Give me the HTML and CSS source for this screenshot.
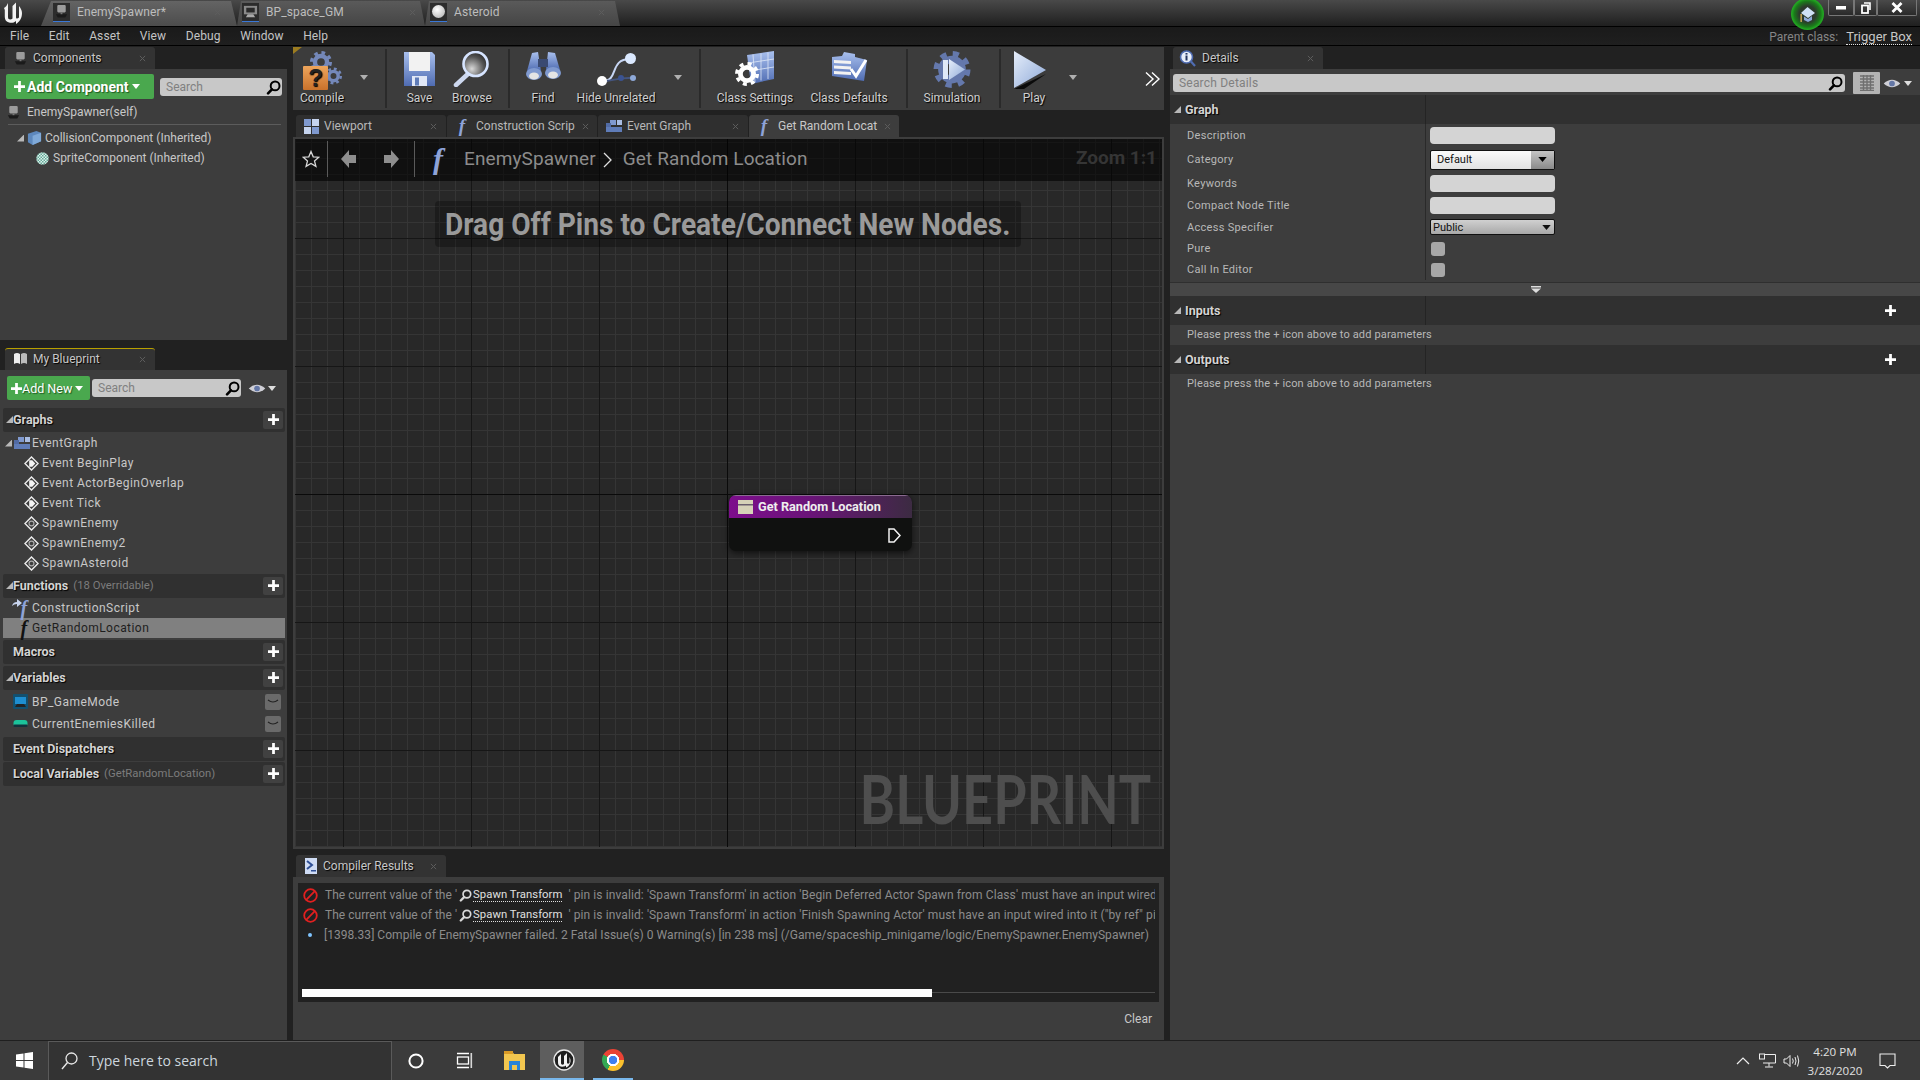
FILE: index.html
```html
<!DOCTYPE html>
<html lang="en">
<head>
    <meta charset="UTF-8">
    <meta name="viewport" content="width=device-width, initial-scale=1.0">
    <title>EnemySpawner</title>
    <link rel="stylesheet" href="styles.css">
</head>
<body>
    <svg class="defs" width="0" height="0">
        <defs>
            <linearGradient id="gb" x1="0" y1="0" x2="0" y2="1"><stop offset="0" stop-color="#a9c0ee"/><stop offset="1" stop-color="#4f6cb2"/></linearGradient>
            <linearGradient id="go" x1="0" y1="0" x2="0" y2="1"><stop offset="0" stop-color="#eda55c"/><stop offset="1" stop-color="#c9722b"/></linearGradient>
            <linearGradient id="gp" x1="0" y1="0" x2="1" y2="1"><stop offset="0" stop-color="#e6eefa"/><stop offset="1" stop-color="#8ea9d8"/></linearGradient>
            <radialGradient id="gl" cx=".35" cy=".7" r=".9"><stop offset="0" stop-color="#d8d8d8"/><stop offset=".55" stop-color="#555"/><stop offset="1" stop-color="#0c0c0c"/></radialGradient>
            <pattern id="chk" width="3" height="3" patternUnits="userSpaceOnUse"><rect width="3" height="3" fill="#dff2ee"/><rect width="1.5" height="1.5" fill="#62a896"/><rect x="1.5" y="1.5" width="1.5" height="1.5" fill="#62a896"/></pattern>
            <symbol id="gear" viewBox="0 0 20 20"><circle cx="10" cy="10" r="5.5" fill="none" stroke="currentColor" stroke-width="4"/><circle cx="10" cy="10" r="8.5" fill="none" stroke="currentColor" stroke-width="3" stroke-dasharray="3.3 3.4"/></symbol>
            <symbol id="search" viewBox="0 0 16 16"><circle cx="9.7" cy="6.3" r="4.7" fill="none" stroke="currentColor" stroke-width="2.1"/><path d="M6.3 10 L2.2 14.2" stroke="currentColor" stroke-width="2.8" stroke-linecap="round"/></symbol>
            <symbol id="eye" viewBox="0 0 24 14"><path d="M1 7 Q12 -3 23 7 Q12 17 1 7Z" fill="#cfcfd6"/><circle cx="12" cy="7" r="3.8" fill="#6477a6"/></symbol>
            <symbol id="down" viewBox="0 0 10 6"><path d="M0 0H10L5 6Z" fill="currentColor"/></symbol>
            <symbol id="plus" viewBox="0 0 12 12"><path d="M4.5 0h3v4.5H12v3H7.5V12h-3V7.5H0v-3h4.5z" fill="currentColor"/></symbol>
            <symbol id="x" viewBox="0 0 8 8"><path d="M1 1L7 7M7 1L1 7" stroke="currentColor" stroke-width="1.1"/></symbol>
            <symbol id="evt" viewBox="0 0 16 16"><path d="M8 1L15 8L8 15L1 8Z" fill="#3d3d3d" stroke="#ececec" stroke-width="1.5"/><path d="M5.5 4.6h3.3L12 8l-3.2 3.4H5.5z" fill="#f4f4f4"/></symbol>
            <symbol id="cst" viewBox="0 0 16 16"><path d="M8 1L15 8L8 15L1 8Z" fill="#3d3d3d" stroke="#ececec" stroke-width="1.5"/><circle cx="8" cy="8" r="2.6" fill="none" stroke="#aaa" stroke-width="1.3"/></symbol>
            <symbol id="tiles" viewBox="0 0 16 12"><rect x="0" y="7" width="16" height="5" fill="#5f7cb8"/><rect x="4" y="0" width="6" height="5" fill="#7f99cf"/><rect x="11" y="0" width="5" height="5" fill="#a9bde3"/><rect x="0" y="3" width="5" height="4" fill="#516ba5"/></symbol>
            <symbol id="actor" viewBox="0 0 16 16"><rect x="3.5" y="1" width="9" height="8" rx="1.2" fill="#9c9c9c"/><rect x="7" y="9" width="2" height="3" fill="#777"/><path d="M2 11h12l-2 3.5H4z" fill="#1a1a1a"/></symbol>
        </defs>
    </svg>

    <div class="titlebar">
        <svg class="ue-logo" viewBox="0 0 20 24" width="20" height="24"><path d="M1 7C3 6 4 4 5 2V16C5 19 8 19 9.5 17.5V5L13 1.5V16C13 18 14.500 18 16 16.500V5C17.500 7 19 9 19 12C19 18 16 21 13 23L13 20C11 22 8 22 6 21.500C3.500 21 1.800 19 1.800 16V9Z" fill="#f2f2f2"/></svg>
        <div class="file-tab file-tab-active">
            <span class="tab-thumb"><svg width="15" height="15"><use href="#actor"/></svg></span>
            <span class="file-tab-name">EnemySpawner*</span>
            <svg class="tab-x" width="7" height="7"><use href="#x"/></svg>
        </div>
        <div class="file-tab file-tab-gm">
            <span class="tab-thumb"><svg width="15" height="15" viewBox="0 0 16 16"><rect x="1" y="2" width="14" height="9" fill="#8a8a8a"/><rect x="3.500" y="4" width="9" height="5" fill="#2a2a2a"/><path d="M3 14h10l-2-3H5z" fill="#aaa"/></svg></span>
            <span class="file-tab-name">BP_space_GM</span>
            <svg class="tab-x" width="7" height="7"><use href="#x"/></svg>
        </div>
        <div class="file-tab file-tab-rock">
            <span class="tab-thumb"><span class="rock"></span></span>
            <span class="file-tab-name">Asteroid</span>
            <svg class="tab-x" width="7" height="7"><use href="#x"/></svg>
        </div>
        <div class="win-btns">
            <div class="win-btn win-min"><svg width="10" height="4"><rect width="10" height="3.500" fill="#fff"/></svg></div>
            <div class="win-btn win-max"><svg width="10" height="12" viewBox="0 0 10 12"><path d="M3 1H9V8" fill="none" stroke="#fff" stroke-width="1.600"/><rect x="1" y="3.500" width="6" height="7.500" fill="none" stroke="#fff" stroke-width="1.800"/></svg></div>
            <div class="win-btn win-close"><svg width="12" height="11" viewBox="0 0 12 11"><path d="M1.500 1L10.500 10M10.500 1L1.500 10" stroke="#fff" stroke-width="2.800"/></svg></div>
        </div>
        <div class="tutorial"><svg width="17" height="17" viewBox="0 0 17 17"><path d="M8.500 1L16 7L9 12L2 7Z" fill="#cfe0f5"/><path d="M5 10.500L9 13L13 10V14L9 16L5 14Z" fill="#8ea9d8"/><rect x="1.500" y="8" width="1.300" height="8" fill="#e2b45a"/></svg></div>
    </div>

    <div class="menubar">
        <span class="menu-item">File</span>
        <span class="menu-item">Edit</span>
        <span class="menu-item">Asset</span>
        <span class="menu-item">View</span>
        <span class="menu-item">Debug</span>
        <span class="menu-item">Window</span>
        <span class="menu-item">Help</span>
        <div class="parent-class">Parent class: <span class="parent-link">Trigger Box</span></div>
    </div>

    <div class="workspace">
        <div class="left">
            <div class="tab-strip">
                <div class="tab">
                    <svg class="tab-icon" width="15" height="15"><use href="#actor"/></svg>
                    <span class="tab-name">Components</span>
                    <svg class="tab-x" width="7" height="7"><use href="#x"/></svg>
                </div>
            </div>
            <div class="panel panel-components">
                <div class="comp-bar">
                    <div class="btn-green btn-component"><svg width="11" height="11"><use href="#plus"/></svg>Add Component<svg class="btn-arrow" width="8" height="5"><use href="#down"/></svg></div>
                    <div class="search search-comp">Search<svg width="15" height="15"><use href="#search"/></svg></div>
                </div>
                <div class="comp-row comp-self"><svg width="15" height="15"><use href="#actor"/></svg><span>EnemySpawner(self)</span></div>
                <div class="comp-row comp-collision">
                    <i class="twist"></i>
                    <svg width="15" height="16" viewBox="0 0 16 17"><path d="M1 4L10 1L15 3V12L6 16L1 13Z" fill="#5d88bd"/><path d="M6 6L15 3V12L6 16Z" fill="#7fa9d8"/></svg>
                    <span>CollisionComponent (Inherited)</span>
                </div>
                <div class="comp-row comp-sprite"><svg width="13" height="13" viewBox="0 0 13 13"><circle cx="6.500" cy="6.500" r="6.200" fill="url(#chk)"/></svg><span>SpriteComponent (Inherited)</span></div>
            </div>

            <div class="tab-strip tab-strip-bp">
                <div class="tab tab-bp">
                    <svg class="tab-icon" width="15" height="14" viewBox="0 0 15 14"><path d="M1 2Q4 0 7 2V12Q4 10 1 12Z" fill="#eee"/><path d="M8 2Q11 0 14 2V12Q11 10 8 12Z" fill="#bbb"/></svg>
                    <span class="tab-name">My Blueprint</span>
                    <svg class="tab-x" width="7" height="7"><use href="#x"/></svg>
                </div>
            </div>
            <div class="panel panel-bp">
                <div class="bp-bar">
                    <div class="btn-green btn-new"><svg width="11" height="11"><use href="#plus"/></svg>Add New<svg class="btn-arrow" width="8" height="5"><use href="#down"/></svg></div>
                    <div class="search search-bp">Search<svg width="15" height="15"><use href="#search"/></svg></div>
                    <svg class="eye" width="18" height="11"><use href="#eye"/></svg>
                    <svg class="eye-arrow" width="8" height="5"><use href="#down"/></svg>
                </div>
                <div class="cat"><i class="twist"></i><b>Graphs</b><span class="cat-add"><svg width="11" height="11"><use href="#plus"/></svg></span></div>
                <div class="item item-graph"><i class="twist"></i><svg width="16" height="12"><use href="#tiles"/></svg><span>EventGraph</span></div>
                <div class="item item-sub"><svg width="15" height="15"><use href="#evt"/></svg><span>Event BeginPlay</span></div>
                <div class="item item-sub"><svg width="15" height="15"><use href="#evt"/></svg><span>Event ActorBeginOverlap</span></div>
                <div class="item item-sub"><svg width="15" height="15"><use href="#evt"/></svg><span>Event Tick</span></div>
                <div class="item item-sub"><svg width="15" height="15"><use href="#cst"/></svg><span>SpawnEnemy</span></div>
                <div class="item item-sub"><svg width="15" height="15"><use href="#cst"/></svg><span>SpawnEnemy2</span></div>
                <div class="item item-sub"><svg width="15" height="15"><use href="#cst"/></svg><span>SpawnAsteroid</span></div>
                <div class="cat cat-fn"><i class="twist"></i><b>Functions</b><small>(18 Overridable)</small><span class="cat-add"><svg width="11" height="11"><use href="#plus"/></svg></span></div>
                <div class="item item-fn"><span class="fn-wrap"><svg class="fn-badge" width="10" height="8" viewBox="0 0 10 8"><path d="M0 7Q1 3 5 3V0L10 4L5 8V5Q2 5 0 7Z" fill="#c8d4ee"/></svg><span class="fn">f</span></span><span>ConstructionScript</span></div>
                <div class="item item-fn item-selected"><span class="fn-wrap"><span class="fn fn-dark">f</span></span><span>GetRandomLocation</span></div>
                <div class="cat cat-gap cat-plain"><b>Macros</b><span class="cat-add"><svg width="11" height="11"><use href="#plus"/></svg></span></div>
                <div class="cat cat-gap"><i class="twist"></i><b>Variables</b><span class="cat-add"><svg width="11" height="11"><use href="#plus"/></svg></span></div>
                <div class="item item-var">
                    <svg width="15" height="15" viewBox="0 0 15 15"><rect width="15" height="15" rx="1" fill="#12506f"/><rect x="2" y="3" width="11" height="7" fill="#1e8ed0"/><path d="M2 13h11l-2-3H4z" fill="#222"/></svg>
                    <span>BP_GameMode</span>
                    <span class="var-eye"><svg width="12" height="5" viewBox="0 0 12 5"><path d="M1 1Q6 5 11 1" fill="none" stroke="#222" stroke-width="1.200"/></svg></span>
                </div>
                <div class="item item-var">
                    <svg width="15" height="15" viewBox="0 0 15 15"><rect x="0.500" y="4" width="14" height="7" rx="3" fill="#1cc39a"/><rect x="0.500" y="8.500" width="14" height="2.500" rx="1" fill="#12323c"/></svg>
                    <span>CurrentEnemiesKilled</span>
                    <span class="var-eye"><svg width="12" height="5" viewBox="0 0 12 5"><path d="M1 1Q6 5 11 1" fill="none" stroke="#222" stroke-width="1.200"/></svg></span>
                </div>
                <div class="cat cat-plain cat-dispatch"><b>Event Dispatchers</b><span class="cat-add"><svg width="11" height="11"><use href="#plus"/></svg></span></div>
                <div class="cat cat-plain cat-local"><b>Local Variables</b><small>(GetRandomLocation)</small><span class="cat-add"><svg width="11" height="11"><use href="#plus"/></svg></span></div>
            </div>
        </div>

        <div class="center">
            <div class="toolbar">
                <div class="tool">
                    <svg width="40" height="40" viewBox="0 0 40 40"><use href="#gear" class="gear-blue" x="8" y="0" width="22" height="22"/><use href="#gear" class="gear-blue" x="23" y="14" width="17" height="22"/><rect x="1" y="15" width="25" height="24" rx="1" fill="url(#go)"/><text x="13.500" y="35" class="q-mark">?</text></svg>
                    <span>Compile</span>
                </div>
                <div class="tool-arrow"><svg width="8" height="5"><use href="#down"/></svg></div>
                <div class="tool-sep"></div>
                <div class="tool">
                    <svg width="33" height="36" viewBox="0 0 33 36"><path d="M1 1H29L32 4V35H1Z" fill="url(#gb)"/><rect x="6" y="1" width="21" height="19" fill="#f2f2f2"/><rect x="9" y="25" width="15" height="10" fill="#e0e7f6"/><rect x="12" y="26.500" width="4" height="8" fill="#5f7cb8"/></svg>
                    <span>Save</span>
                </div>
                <div class="tool">
                    <svg width="38" height="36" viewBox="0 0 38 36"><path d="M16 22L3 34" stroke="#cdd8ef" stroke-width="4.500" stroke-linecap="round"/><circle cx="22.500" cy="13" r="12" fill="url(#gl)" stroke="#d6e4ff" stroke-width="2.600"/></svg>
                    <span>Browse</span>
                </div>
                <div class="tool-sep"></div>
                <div class="tool">
                    <svg width="38" height="33" viewBox="0 0 38 33"><path d="M8 2L14 1L17 20H3Z" fill="url(#gb)"/><path d="M24 1L31 2L36 19H22Z" fill="url(#gb)"/><rect x="14" y="8" width="10" height="8" fill="#3a4a72"/><ellipse cx="10" cy="23" rx="8" ry="6" fill="#7f99cf"/><ellipse cx="29" cy="22" rx="8" ry="6" fill="#7f99cf"/><ellipse cx="10" cy="25" rx="5" ry="3.500" fill="#e4e4e4"/><ellipse cx="29" cy="24" rx="5" ry="3.500" fill="#e4e4e4"/></svg>
                    <span>Find</span>
                </div>
                <div class="tool">
                    <svg width="42" height="36" viewBox="0 0 42 36"><path d="M8 30C24 30 14 8 35 8" fill="none" stroke="#c7d6f4" stroke-width="2"/><path d="M8 30C20 30 24 26 37 27" fill="none" stroke="#44557f" stroke-width="2"/><circle cx="7" cy="30" r="5" fill="#fff"/><circle cx="35.500" cy="7.500" r="5.500" fill="#dbe9ff"/><circle cx="26" cy="27" r="3" fill="#3b5391"/><circle cx="38" cy="27" r="3" fill="#8ea9d8"/></svg>
                    <span>Hide Unrelated</span>
                </div>
                <div class="tool-arrow"><svg width="8" height="5"><use href="#down"/></svg></div>
                <div class="tool-sep"></div>
                <div class="tool">
                    <svg width="40" height="36" viewBox="0 0 40 36"><path d="M12 4L39 0V28L16 33Z" fill="url(#gb)"/><path d="M18 3.500L20 31M26 2.500V29.500M33 1.500V28M13 12L39 8M14 20L39 16" stroke="#dfe9f8" stroke-width=".8"/><use href="#gear" class="gear-white" x="0" y="11" width="24" height="24"/></svg>
                    <span>Class Settings</span>
                </div>
                <div class="tool">
                    <svg width="38" height="33" viewBox="0 0 38 33"><path d="M2 6L12 5L14 1L25 3V6L37 9L34 30L2 25Z" fill="url(#gb)"/><path d="M4 9L21 10V13L4 12ZM4 14.500L21 15.500V18.500L4 17.500ZM4 20L21 21V24L4 23Z" fill="#f2f2f2"/><path d="M21 18L26 25L36 9" fill="none" stroke="#fff" stroke-width="3"/></svg>
                    <span>Class Defaults</span>
                </div>
                <div class="tool-sep"></div>
                <div class="tool">
                    <svg width="38" height="37" viewBox="0 0 38 37"><use href="#gear" class="gear-sim" x="0" y="0" width="38" height="37"/><rect x="10" y="9" width="5" height="19" fill="#dfe9f8"/><path d="M16 8L32 18.500L16 29Z" fill="url(#gp)"/></svg>
                    <span>Simulation</span>
                </div>
                <div class="tool-sep"></div>
                <div class="tool tool-play">
                    <svg width="33" height="38" viewBox="0 0 33 38"><path d="M0 38L32 23L10 38Z" fill="#0b0b0b"/><path d="M0 0L32 19L0 37Z" fill="url(#gp)"/></svg>
                    <span>Play</span>
                </div>
                <div class="tool-arrow"><svg width="8" height="5"><use href="#down"/></svg></div>
                <div class="tool-more"><svg width="16" height="16" viewBox="0 0 16 16"><path d="M1 1.500L8 8L1 14.500M7 1.500L14 8L7 14.500" fill="none" stroke="#fff" stroke-width="1.400"/></svg></div>
            </div>

            <div class="doc-tabs">
                <div class="doc-tab"><svg width="15" height="15" viewBox="0 0 15 15"><rect width="7" height="7" fill="#7f99cf"/><rect x="8" width="7" height="7" fill="#c5d3ee"/><rect y="8" width="7" height="7" fill="#c5d3ee"/><rect x="8" y="8" width="7" height="7" fill="#7f99cf"/></svg><span>Viewport</span><svg class="tab-x" width="7" height="7"><use href="#x"/></svg></div>
                <div class="doc-tab"><span class="fn">f</span><span>Construction Scrip</span><svg class="tab-x" width="7" height="7"><use href="#x"/></svg></div>
                <div class="doc-tab"><svg width="16" height="12"><use href="#tiles"/></svg><span>Event Graph</span><svg class="tab-x" width="7" height="7"><use href="#x"/></svg></div>
                <div class="doc-tab doc-tab-active"><span class="fn">f</span><span>Get Random Locat</span><svg class="tab-x" width="7" height="7"><use href="#x"/></svg></div>
            </div>

            <div class="graph">
                <div class="graph-head">
                    <svg class="star" width="18" height="18" viewBox="0 0 18 18"><path d="M9 1.500L11.200 6.800L16.800 7.200L12.500 10.900L13.900 16.400L9 13.400L4.100 16.400L5.500 10.900L1.200 7.200L6.800 6.800Z" fill="none" stroke="#d8d8d8" stroke-width="1.300"/></svg>
                    <i class="graph-sep"></i>
                    <svg class="nav-arrow" width="16" height="20" viewBox="0 0 16 20"><path d="M8 1V6H15V14H8V19L0 10Z" fill="#8e8e8e"/></svg>
                    <svg class="nav-arrow nav-next" width="16" height="20" viewBox="0 0 16 20"><path d="M8 1V6H1V14H8V19L16 10Z" fill="#8e8e8e"/></svg>
                    <i class="graph-sep graph-sep-2"></i>
                    <span class="fn fn-big">f</span>
                    <span class="crumb">EnemySpawner</span>
                    <svg class="crumb-arrow" width="9" height="16" viewBox="0 0 9 16"><path d="M1 1L8 8L1 15" fill="none" stroke="#e0e0e0" stroke-width="1.300"/></svg>
                    <span class="crumb">Get Random Location</span>
                    <span class="zoom-label">Zoom 1:1</span>
                </div>
                <div class="hint"><span>Drag Off Pins to Create/Connect New Nodes.</span></div>
                <div class="node">
                    <div class="node-head">
                        <svg width="15" height="14" viewBox="0 0 15 14"><rect width="15" height="14" fill="#d6d2b8"/><rect y="4" width="15" height="1.500" fill="#6a5f6e"/></svg>
                        <span>Get Random Location</span>
                    </div>
                    <div class="node-body"><svg width="13" height="15" viewBox="0 0 13 15"><path d="M1 1H6L12 7.500L6 14H1Z" fill="none" stroke="#f2f2f2" stroke-width="1.500"/></svg></div>
                </div>
                <div class="watermark"><span>BLUEPRINT</span></div>
            </div>

            <div class="tab-strip tab-strip-results">
                <div class="tab">
                    <svg class="tab-icon" width="14" height="16" viewBox="0 0 14 16"><rect x="1" width="12" height="16" fill="#cfdcf5"/><path d="M3 3L8 7L3 11" fill="none" stroke="#2f4f96" stroke-width="2"/><rect x="7" y="12" width="5" height="1.500" fill="#2f4f96"/></svg>
                    <span class="tab-name">Compiler Results</span>
                    <svg class="tab-x" width="7" height="7"><use href="#x"/></svg>
                </div>
            </div>
            <div class="panel panel-results">
                <div class="results">
                    <div class="result-rows">
                        <div class="result">
                            <svg class="err" width="15" height="15" viewBox="0 0 15 15"><circle cx="7.500" cy="7.500" r="6.300" fill="none" stroke="#e02020" stroke-width="1.800"/><path d="M3.200 11.800L11.800 3.200" stroke="#e02020" stroke-width="1.800"/></svg>
                            <span>The current value of the '</span><svg class="link-icon" width="13" height="13"><use href="#search"/></svg><span class="result-link">Spawn Transform</span><span class="result-tail">' pin is invalid: 'Spawn Transform' in action 'Begin Deferred Actor Spawn from Class' must have an input wired into it</span>
                        </div>
                        <div class="result">
                            <svg class="err" width="15" height="15" viewBox="0 0 15 15"><circle cx="7.500" cy="7.500" r="6.300" fill="none" stroke="#e02020" stroke-width="1.800"/><path d="M3.200 11.800L11.800 3.200" stroke="#e02020" stroke-width="1.800"/></svg>
                            <span>The current value of the '</span><svg class="link-icon" width="13" height="13"><use href="#search"/></svg><span class="result-link">Spawn Transform</span><span class="result-tail">' pin is invalid: 'Spawn Transform' in action 'Finish Spawning Actor' must have an input wired into it ("by ref" pins must</span>
                        </div>
                        <div class="result">
                            <i class="result-dot"></i>
                            <span>[1398.33] Compile of EnemySpawner failed. 2 Fatal Issue(s) 0 Warning(s) [in 238 ms] (/Game/spaceship_minigame/logic/EnemySpawner.EnemySpawner)</span>
                        </div>
                    </div>
                    <div class="scroll-track"><div class="scroll-thumb"></div></div>
                </div>
                <div class="results-foot">Clear</div>
            </div>
        </div>

        <div class="right">
            <div class="tab-strip tab-strip-details">
                <div class="tab tab-details">
                    <svg class="tab-icon" width="17" height="17" viewBox="0 0 17 17"><circle cx="7.500" cy="7" r="6" fill="#e8eefb" stroke="#4f6cb2" stroke-width="1.600"/><rect x="6.500" y="5.500" width="2" height="5" fill="#24345f"/><rect x="6.500" y="3" width="2" height="1.600" fill="#24345f"/><path d="M12 11.500L16 16" stroke="#4f6cb2" stroke-width="2.200"/></svg>
                    <span class="tab-name">Details</span>
                    <svg class="tab-x" width="7" height="7"><use href="#x"/></svg>
                </div>
            </div>
            <div class="panel panel-details">
                <div class="details-bar">
                    <div class="search search-details">Search Details<svg width="15" height="15"><use href="#search"/></svg></div>
                    <div class="grid-btn"><svg width="14" height="16" viewBox="0 0 14 16"><path d="M0 1H14M0 4H14M0 7H14M0 10H14M0 13H14M0 15.500H14M3.500 0V16M7 0V16M10.500 0V16" stroke="#6f6f6f" stroke-width="1.400"/></svg></div>
                    <svg class="eye" width="18" height="11"><use href="#eye"/></svg>
                    <svg class="eye-arrow" width="8" height="5"><use href="#down"/></svg>
                </div>

                <div class="d-head"><div class="d-head-label"><i class="twist"></i><b>Graph</b></div></div>
                <div class="d-row h23"><div class="d-label">Description</div><div class="d-value"><div class="d-input"></div></div></div>
                <div class="d-row h25"><div class="d-label">Category</div><div class="d-value"><div class="combo"><span>Default</span><span class="combo-btn"><svg width="9" height="5"><use href="#down"/></svg></span></div></div></div>
                <div class="d-row"><div class="d-label">Keywords</div><div class="d-value"><div class="d-input"></div></div></div>
                <div class="d-row"><div class="d-label">Compact Node Title</div><div class="d-value"><div class="d-input"></div></div></div>
                <div class="d-row"><div class="d-label">Access Specifier</div><div class="d-value"><div class="combo-flat"><span>Public</span><svg width="9" height="5"><use href="#down"/></svg></div></div></div>
                <div class="d-row h21"><div class="d-label">Pure</div><div class="d-value"><div class="check"></div></div></div>
                <div class="d-row h21"><div class="d-label">Call In Editor</div><div class="d-value"><div class="check"></div></div></div>
                <div class="d-more"><svg width="10" height="7" viewBox="0 0 10 7"><rect width="10" height="1.500" fill="#ddd"/><path d="M0 2.500H10L5 7Z" fill="#ddd"/></svg></div>

                <div class="d-head d-head-add"><div class="d-head-label"><i class="twist"></i><b>Inputs</b></div><svg class="d-plus" width="11" height="11"><use href="#plus"/></svg></div>
                <div class="d-note">Please press the + icon above to add parameters</div>
                <div class="d-head d-head-add"><div class="d-head-label"><i class="twist"></i><b>Outputs</b></div><svg class="d-plus" width="11" height="11"><use href="#plus"/></svg></div>
                <div class="d-note">Please press the + icon above to add parameters</div>
            </div>
        </div>
    </div>

    <div class="taskbar">
        <div class="task-start"><svg width="17" height="17" viewBox="0 0 17 17"><path d="M0 2.500L7.500 1.400V8H0ZM8.500 1.300L17 0V8H8.500ZM0 9H7.500V15.600L0 14.500ZM8.500 9H17V17L8.500 15.700Z" fill="#fff"/></svg></div>
        <div class="task-search">
            <svg width="17" height="18" viewBox="0 0 17 18"><circle cx="10.500" cy="6.500" r="5.500" fill="none" stroke="#e8e8e8" stroke-width="1.300"/><path d="M6.500 10.500L1 17" stroke="#e8e8e8" stroke-width="1.400"/></svg>
            <span>Type here to search</span>
        </div>
        <div class="task-cell"><svg width="16" height="16" viewBox="0 0 16 16"><circle cx="8" cy="8" r="6.600" fill="none" stroke="#fff" stroke-width="2"/></svg></div>
        <div class="task-cell"><svg width="17" height="17" viewBox="0 0 17 17"><rect x="1.500" y="5" width="11" height="7" fill="none" stroke="#fff" stroke-width="1.300"/><path d="M1 1.500H13M1 15.500H13" stroke="#fff" stroke-width="1.300"/><rect x="14.500" y="1" width="1.600" height="15" fill="#fff" opacity=".8"/></svg></div>
        <div class="task-cell task-folder"><svg width="23" height="21" viewBox="0 0 23 21"><path d="M1 1H9L11 4H22V20H1Z" fill="#f2c64f"/><rect x="1" y="1" width="9" height="3" fill="#d99a26"/><path d="M6 11H17V20H14V15H9V20H6Z" fill="#2a84d8"/></svg></div>
        <div class="task-cell task-active"><svg width="22" height="22" viewBox="0 0 22 22"><circle cx="11" cy="11" r="10" fill="#1f1f1f" stroke="#e8e8e8" stroke-width="1.400"/><path d="M5 8C6 7 7 6 8 5V14C8 16 10 16 11 15V7L14 4V14C14.500 15 15.500 15 16.500 14V8C17.500 10 18 12 17 14.500C16 17 14.500 18 13 18.500V16.500C11 18 8 18 6.500 17C5 16 5 14 5 12Z" fill="#f4f4f4"/></svg></div>
        <div class="task-cell task-chrome"><i class="chrome"></i></div>
        <div class="tray">
            <div class="tray-cell"><svg width="14" height="8" viewBox="0 0 14 8"><path d="M1 7L7 1L13 7" fill="none" stroke="#eee" stroke-width="1.200"/></svg></div>
            <div class="tray-cell"><svg width="17" height="15" viewBox="0 0 17 15"><path d="M4 1.500H16.500V10H4M10 10V13.500M6 14H14" fill="none" stroke="#eee" stroke-width="1"/><rect x=".5" y="1" width="5" height="5" fill="#3b3b3b" stroke="#eee"/></svg></div>
            <div class="tray-cell"><svg width="17" height="14" viewBox="0 0 17 14"><path d="M1 5H3.500L7 1.500V12.500L3.500 9H1Z" fill="none" stroke="#eee"/><path d="M9.500 4.500Q11 7 9.500 9.500M12 3Q14 7 12 11M14.500 1.500Q17 7 14.500 12.500" fill="none" stroke="#eee"/></svg></div>
            <div class="clock"><div>4:20 PM</div><div>3/28/2020</div></div>
            <div class="tray-cell tray-note"><svg width="17" height="16" viewBox="0 0 17 16"><path d="M1 1H16V12.500H11L8.500 15L6 12.500H1Z" fill="none" stroke="#eee" stroke-width="1.100"/></svg></div>
        </div>
    </div>
</body>
</html>
```
FILE: styles.css
```css
* {
    box-sizing: border-box;
}

body {
    font-family: Roboto, "Liberation Sans", sans-serif;
    font-size: 12px;
    margin: 0;
    width: 1920px;
    height: 1080px;
    overflow: hidden;
    background-color: #212121;
    color: #c8c8c8;
    display: flex;
    flex-direction: column;
}

.defs {
    position: absolute;
}

svg {
    flex: none;
    display: block;
}

i {
    display: block;
    flex: none;
}

.tab-x {
    color: #5e5e5e;
    margin-left: auto;
}

.twist {
    width: 7px;
    height: 7px;
    background-color: #b8b8b8;
    clip-path: polygon(100% 0, 100% 100%, 0 100%);
}

.fn {
    font-family: "Liberation Serif", serif;
    font-style: italic;
    font-weight: bold;
    font-size: 19px;
    line-height: 18px;
    color: #8ea3d8;
    width: 14px;
    flex: none;
    text-align: center;
}

/* title bar */

.titlebar {
    position: relative;
    height: 27px;
    flex: none;
    display: flex;
    align-items: flex-end;
    background: linear-gradient(#494949, #1f1f1f);
    border-bottom: 1px solid #000;
}

.ue-logo {
    margin: 0 18px 1px 3px;
}

.file-tab {
    height: 25px;
    display: flex;
    align-items: center;
    padding: 0 16px 3px 5px;
    background: linear-gradient(#5a5a5a, #454545);
    clip-path: polygon(0 100%, 4px 0, calc(100% - 5px) 0, 100% 100%);
    color: #bdbdbd;
    letter-spacing: .1px;
}

.file-tab-active {
    width: 196px;
    padding-left: 12px;
    background: linear-gradient(#646464, #4c4c4c);
    clip-path: polygon(0 100%, 10px 0, calc(100% - 6px) 0, 100% 100%);
}

.file-tab-gm {
    width: 188px;
    padding-right: 9px;
}

.file-tab-rock {
    width: 195px;
    padding-right: 15px;
}

.tab-thumb {
    width: 17px;
    height: 19px;
    background-color: #2c2c2c;
    border-bottom: 1px solid #3a78d8;
    display: flex;
    align-items: center;
    justify-content: center;
    margin-right: 7px;
}

.rock {
    width: 13px;
    height: 13px;
    border-radius: 50%;
    background: radial-gradient(circle at 40% 35%, #fff, #aaa);
}

.win-btns {
    display: flex;
    align-self: flex-start;
    margin-left: auto;
    margin-right: 3px;
    height: 16px;
}

.win-btn {
    height: 16px;
    display: flex;
    align-items: center;
    justify-content: center;
    background: linear-gradient(#4a4a4a, #2a2a2a);
    border: 1px solid #777;
    border-top: 0;
    border-radius: 0 0 2px 2px;
}

.win-min {
    width: 26px;
}

.win-max {
    width: 23px;
}

.win-close {
    width: 40px;
}

.tutorial {
    position: absolute;
    left: 1791px;
    top: -2px;
    width: 33px;
    height: 32px;
    border-radius: 50%;
    background: radial-gradient(closest-side, #2c3a2c 50%, #1a7a1a 80%, #22a822 96%);
    display: flex;
    align-items: center;
    justify-content: center;
    z-index: 2;
}

/* menu */

.menubar {
    height: 19px;
    flex: none;
    display: flex;
    align-items: center;
    padding-left: 10px;
    background: linear-gradient(#1a1a1a, #1f1f1f);
    border-bottom: 1px solid #000;
    color: #c4c4c4;
}

.menu-item {
    margin-right: 19.6px;
    letter-spacing: .1px;
}

.parent-class {
    margin-left: auto;
    margin-right: 8px;
    color: #868686;
}

.parent-link {
    margin-left: 5px;
    font-size: 13px;
    color: #c8c8c8;
    border-bottom: 1px dotted #e0e0e0;
}

/* workspace columns */

.workspace {
    flex: 1;
    min-height: 0;
    display: flex;
    gap: 6px;
    padding-top: 1px;
}

.left, .center, .right {
    display: flex;
    flex-direction: column;
    flex: none;
}

.left {
    width: 287px;
}

.center {
    width: 871px;
}

.right {
    width: 750px;
}

.tab-strip {
    height: 22px;
    flex: none;
    padding-left: 5px;
}

.tab-strip-bp {
    margin-top: 8px;
}

.tab-strip-results {
    margin-top: 6px;
    padding-left: 3px;
}

.tab-strip-details {
    padding-left: 3px;
}

.tab {
    width: 150px;
    height: 22px;
    display: flex;
    align-items: center;
    padding: 0 9px 0 8px;
    background-color: #333;
    border-radius: 3px 3px 0 0;
    color: #c8c8c8;
}

.tab-bp {
    border-top: 1px solid #b8a000;
    padding-bottom: 1px;
}

.tab-details {
    padding-left: 6px;
}

.tab-details .tab-icon {
    margin-right: 6px;
}

.tab-icon {
    margin-right: 5px;
}

.tab-name {
    text-shadow: 1px 1px 1px #000;
}

.panel {
    background-color: #3d3d3d;
}

.panel-components {
    height: 271px;
    flex: none;
}

.panel-bp, .panel-results, .panel-details {
    flex: 1;
    min-height: 0;
}

/* buttons and search fields */

.btn-green {
    display: flex;
    align-items: center;
    background-color: #4aa84e;
    color: #fff;
    font-weight: bold;
    border-radius: 2px;
    text-shadow: 1px 1px 1px #1f5a22;
}

.btn-arrow {
    margin-left: 3px;
}

.search {
    display: flex;
    align-items: center;
    justify-content: space-between;
    height: 18px;
    padding: 0 1px 0 6px;
    background-color: #c8c8c8;
    color: #808080;
    border-radius: 3px;
}

.search svg {
    color: #000;
}

.comp-bar {
    display: flex;
    align-items: flex-start;
    gap: 6px;
    height: 33px;
    padding: 5px 0 0 6px;
}

.btn-component {
    width: 148px;
    height: 25px;
    padding-left: 8px;
    font-size: 14px;
    gap: 2px;
}

.btn-component .btn-arrow {
    margin-left: 1px;
}

.search-comp {
    width: 122px;
    margin-top: 4px;
}

.comp-row {
    display: flex;
    align-items: center;
    height: 20px;
}

.comp-self {
    height: 20px;
    padding-left: 6px;
    gap: 6px;
    position: relative;
    margin-bottom: 6px;
}

.comp-self::after {
    content: "";
    position: absolute;
    left: 8px;
    right: 6px;
    bottom: -3px;
    height: 1px;
    background-color: #5c5c5c;
}

.comp-collision {
    padding-left: 17px;
    gap: 3px;
}

.comp-sprite {
    padding-left: 36px;
    gap: 4px;
}

.bp-bar {
    display: flex;
    align-items: center;
    height: 36px;
    padding: 0 0 0 7px;
    gap: 2px;
    margin-bottom: 2px;
}

.btn-new {
    width: 83px;
    height: 24px;
    padding-left: 4px;
    font-weight: normal;
    font-size: 12.5px;
}

.search-bp {
    width: 149px;
}

.eye {
    margin-left: 6px;
}

.eye-arrow {
    margin-left: 3px;
    color: #ddd;
}

.bp-bar .eye {
    margin-left: 5px;
}

.bp-bar .eye-arrow {
    margin-left: 0;
}

.cat {
    display: flex;
    align-items: center;
    height: 24px;
    margin: 0 2px 0 3px;
    padding: 0 0 1px 3px;
    background-color: #303030;
    border-radius: 2px;
    color: #d4d4d4;
    text-shadow: 1px 1px 1px #000;
}

.cat .twist {
    margin-right: 0;
}

.cat b {
    font-weight: bold;
    font-size: 12.5px;
}

.cat small {
    font-size: 11.3px;
    color: #7c7c7c;
    margin-left: 5px;
    text-shadow: none;
}

.cat-plain {
    padding-left: 10px;
}

.cat-gap {
    margin-top: 2px;
}

.cat-fn {
    margin-top: 1px;
}

.cat-dispatch {
    margin-top: 3px;
}

.cat-local {
    margin-top: 1px;
}

.cat-add {
    margin-left: auto;
    margin-right: 2px;
    width: 20px;
    height: 18px;
    background-color: #414141;
    border-radius: 2px;
    display: flex;
    align-items: center;
    justify-content: center;
    color: #fff;
}

.item {
    display: flex;
    align-items: center;
    height: 20px;
    margin: 0 2px 0 3px;
    color: #c8c8c8;
    letter-spacing: .45px;
}

.item-graph {
    padding-left: 2px;
    gap: 2px;
    margin-top: 1px;
}

.item-graph .twist {
    margin-right: 0;
}

.item-sub {
    padding-left: 21px;
    gap: 3px;
}

.item-fn {
    padding-left: 8px;
    gap: 1px;
}

.fn-wrap {
    position: relative;
    width: 20px;
    height: 18px;
    display: flex;
    justify-content: flex-end;
    flex: none;
}

.fn-wrap .fn {
    font-size: 20px;
    line-height: 18px;
    width: 14px;
}

.fn-badge {
    position: absolute;
    left: 1px;
    top: 0;
}

.fn-dark {
    color: #111;
}

.item-selected {
    background-color: #808080;
    color: #1e1e1e;
}

.item-var {
    height: 22px;
    padding: 1px 4px 0 10px;
    gap: 4px;
}

.var-eye {
    margin-left: auto;
    width: 16px;
    height: 16px;
    background-color: #6a6a6a;
    border-radius: 2px;
    display: flex;
    align-items: center;
    justify-content: center;
}

/* toolbar */

.toolbar {
    height: 63px;
    flex: none;
    display: grid;
    grid-template-columns: 58px 26px 10px 65px 40px 18px 66px 80px 43px 2px 108px 80px 19px 88px 5px 66px 12px 1fr;
    background-color: #3c3c3c;
    position: relative;
}

.toolbar::before {
    content: "";
    position: absolute;
    left: 0;
    top: 0;
    width: 9px;
    height: 7px;
    background-color: #9c7c20;
    clip-path: polygon(0 0, 100% 0, 0 100%);
}

.tool {
    display: flex;
    flex-direction: column;
    align-items: center;
    justify-content: space-between;
    padding: 4px 0 5px;
    color: #cfcfcf;
    text-shadow: 1px 1px 1px #000;
    white-space: nowrap;
}

.tool-play svg {
    margin-right: 7px;
}

.tool-arrow {
    display: flex;
    justify-content: center;
    padding-top: 28px;
    color: #b0b0b0;
}

.tool-sep {
    width: 2px;
    justify-self: end;
    margin: 2px 0 2px;
    background-color: #2a2a2a;
}

.tool-more {
    justify-self: end;
    padding: 24px 3px 0 0;
}

.gear-blue {
    color: #7488ba;
}

.gear-white {
    color: #fff;
}

.gear-sim {
    color: #6478ac;
}

.q-mark {
    font-family: "Liberation Sans", sans-serif;
    font-size: 24px;
    font-weight: bold;
    fill: #222;
    text-anchor: middle;
}

/* document tabs */

.doc-tabs {
    height: 22px;
    flex: none;
    margin-top: 5px;
    display: flex;
    padding-left: 3px;
    gap: 1px;
}

.doc-tab {
    width: 150px;
    height: 22px;
    display: flex;
    align-items: center;
    gap: 7px;
    padding: 0 9px 0 8px;
    background-color: #2f2f2f;
    border-radius: 3px 3px 0 0;
    color: #b8b8b8;
    white-space: nowrap;
}

.doc-tab > svg:first-child {
    margin-right: -2px;
}

.doc-tab-active {
    background-color: #3d3d3d;
    color: #c8c8c8;
}

/* graph canvas */

.graph {
    position: relative;
    height: 712px;
    flex: none;
    border: 2px solid #3d3d3d;
    background-color: #282828;
    background-image:
        linear-gradient(#0a0a0a, #0a0a0a),
        linear-gradient(#0a0a0a, #0a0a0a),
        linear-gradient(90deg, #161616 1px, transparent 1px),
        linear-gradient(#161616 1px, transparent 1px),
        linear-gradient(90deg, #353535 1px, transparent 1px),
        linear-gradient(#353535 1px, transparent 1px);
    background-size:
        1px 100%,
        100% 1px,
        128px 128px,
        128px 128px,
        16px 16px,
        16px 16px;
    background-position:
        432px 0,
        0 355px,
        48px 0,
        0 99px,
        0 0,
        0 3px;
    background-repeat: no-repeat, no-repeat, repeat, repeat, repeat, repeat;
}

.graph-head {
    height: 42px;
    display: flex;
    align-items: center;
    padding: 0 0 2px 7px;
    background-color: rgba(0, 0, 0, .58);
    font-size: 19px;
}

.star {
    margin-right: 7px;
}

.graph-sep {
    width: 1px;
    height: 36px;
    background-color: #5a5a5a;
}

.nav-arrow {
    margin-left: 13px;
}

.nav-next {
    margin-left: 26px;
}

.graph-sep-2 {
    margin-left: 15px;
}

.fn-big {
    font-size: 30px;
    line-height: 30px;
    width: 22px;
    margin-left: 12px;
    margin-right: 15px;
}

.crumb {
    color: #8c8c8c;
    letter-spacing: .1px;
    margin-bottom: 2px;
}

.crumb-arrow {
    margin: 2px 11px 0 7px;
}

.zoom-label {
    margin: 0 5px 4px auto;
    font-weight: bold;
    color: #353535;
}

.hint {
    position: absolute;
    left: 140px;
    top: 62px;
    width: 586px;
    height: 46px;
    display: flex;
    align-items: center;
    justify-content: center;
    background-color: rgba(0, 0, 0, .28);
    border-radius: 4px;
    color: #9a9a9a;
    font-size: 31px;
    font-weight: bold;
    white-space: nowrap;
}

.hint span {
    transform: scaleX(.907);
}

.node {
    position: absolute;
    left: 434px;
    top: 356px;
    width: 183px;
    height: 56px;
    border-radius: 7px;
    background-color: #101110;
    box-shadow: 0 2px 6px rgba(0, 0, 0, .6);
    overflow: hidden;
}

.node-head {
    height: 23px;
    display: flex;
    align-items: center;
    gap: 5px;
    padding: 0 0 1px 9px;
    background: linear-gradient(90deg, #7d0e8c 0%, #6a1478 45%, #3c2b42 100%);
    border-top: 1px solid #8a6a90;
    color: #eee;
    font-size: 12.7px;
    font-weight: bold;
}

.node-body {
    display: flex;
    justify-content: flex-end;
    padding: 10px 11px 0 0;
}

.watermark {
    position: absolute;
    right: 11px;
    bottom: 14px;
    height: 70px;
    color: #4e4e4e;
    font-family: Lato, Roboto, sans-serif;
    font-size: 67px;
    line-height: 70px;
    font-weight: bold;
}

.watermark span {
    display: block;
    transform: scaleX(.805);
    transform-origin: right center;
}

/* compiler results */

.panel-results {
    padding: 6px 5px 0 5px;
}

.results {
    height: 119px;
    background-color: #212121;
    color: #8c8c8c;
}

.result-rows {
    height: 106px;
    padding: 2px 0 0 5px;
    overflow: hidden;
}

.result {
    display: flex;
    align-items: center;
    height: 20px;
    white-space: nowrap;
    overflow: hidden;
    width: 852px;
    letter-spacing: .04px;
}

.result > span {
    flex: none;
}

.err {
    margin-right: 7px;
}

.result-dot {
    width: 4px;
    height: 4px;
    margin: 0 12px 0 5px;
    border-radius: 50%;
    background-color: #7fc4ff;
}

.link-icon {
    color: #d8d8d8;
    margin-left: 2px;
}

.result-link {
    color: #e0e0e0;
    font-size: 11.3px;
    border-bottom: 1px dotted #e0e0e0;
    margin-left: 1px;
}

.result-tail {
    margin-left: 6px;
    letter-spacing: .1px;
}

.scroll-track {
    margin: 0 4px;
    height: 8px;
    background: linear-gradient(transparent 3px, #4a4a4a 3px, #4a4a4a 4px, transparent 4px);
}

.scroll-thumb {
    width: 630px;
    height: 8px;
    background-color: #fff;
}

.results-foot {
    text-align: right;
    padding: 10px 7px 0 0;
    color: #c8c8c8;
}

/* details */

.details-bar {
    height: 26px;
    display: flex;
    align-items: center;
    padding: 2px 0 0 3px;
}

.search-details {
    width: 672px;
    padding-left: 6px;
    padding-right: 2px;
    margin-right: 8px;
    letter-spacing: .2px;
}

.grid-btn {
    width: 27px;
    height: 22px;
    background-color: #b4b4b4;
    display: flex;
    align-items: center;
    justify-content: center;
    border-radius: 1px;
}

.details-bar .eye {
    margin-left: 3px;
}

.d-head {
    height: 29px;
    display: flex;
    align-items: center;
    background-color: #303030;
    color: #d4d4d4;
    text-shadow: 1px 1px 1px #000;
}

.d-head-label {
    width: 256px;
    height: 100%;
    display: flex;
    align-items: center;
    gap: 4px;
    padding-left: 4px;
    border-right: 1px solid #242424;
}

.d-head b {
    font-size: 12.5px;
}

.d-plus {
    margin-left: 459px;
    color: #fff;
}

.d-row {
    display: flex;
    height: 22px;
}

.h21 {
    height: 21px;
}

.h23 {
    height: 23px;
}

.h25 {
    height: 25px;
}

.d-label {
    width: 256px;
    padding-left: 17px;
    display: flex;
    align-items: center;
    border-right: 1px solid #2a2a2a;
    color: #b8b8b8;
    font-size: 11px;
    letter-spacing: .3px;
}

.d-value {
    display: flex;
    align-items: center;
    padding-left: 4px;
}

.d-input {
    width: 125px;
    height: 17px;
    background-color: #d4d4d4;
    border-radius: 4px;
}

.combo {
    width: 125px;
    height: 20px;
    display: flex;
    align-items: center;
    justify-content: space-between;
    border: 1px solid #111;
    border-radius: 2px;
    padding-left: 6px;
    background: linear-gradient(#fafafa, #e2e2e2);
    color: #111;
    font-size: 11px;
}

.combo-btn {
    width: 23px;
    height: 18px;
    display: flex;
    align-items: center;
    justify-content: center;
    background: linear-gradient(#c4c4c4, #8a8a8a);
    color: #000;
}

.combo-flat {
    width: 125px;
    height: 16px;
    display: flex;
    align-items: center;
    justify-content: space-between;
    border: 1px solid #111;
    border-radius: 2px;
    padding: 0 3px 0 2px;
    background: linear-gradient(#d0d0d0, #a8a8a8);
    color: #111;
    font-size: 11px;
}

.check {
    width: 14px;
    height: 14px;
    margin-left: 1px;
    background-color: #a8a8a8;
    border-radius: 3px;
}

.d-more {
    height: 14px;
    margin-top: 2px;
    display: flex;
    align-items: center;
    justify-content: center;
    padding-right: 18px;
    background-color: #474747;
    border-top: 1px solid #2f2f2f;
}

.d-note {
    height: 20px;
    display: flex;
    align-items: center;
    padding: 0 0 2px 17px;
    color: #b8b8b8;
    font-size: 11px;
    letter-spacing: .15px;
}

/* windows taskbar */

.taskbar {
    height: 40px;
    flex: none;
    display: flex;
    align-items: center;
    background-color: #3b3b3b;
    border-top: 1px solid #1f1f1f;
    font-family: "Open Sans", sans-serif;
}

.task-start {
    width: 48px;
    display: flex;
    justify-content: center;
}

.task-search {
    width: 344px;
    height: 39px;
    display: flex;
    align-items: center;
    gap: 11px;
    padding: 0 0 1px 12px;
    background-color: #333;
    border: 1px solid #5a5a5a;
    border-bottom: 0;
    color: #cdd6de;
    font-size: 14px;
}

.task-cell {
    width: 48px;
    height: 39px;
    display: flex;
    align-items: center;
    justify-content: center;
}

.task-folder {
    width: 52px;
}

.task-active {
    width: 44px;
    padding-left: 4px;
    background-color: #5e5e5e;
    border-bottom: 2px solid #79b8ec;
}

.task-chrome {
    width: 40px;
    margin-left: 9px;
    border-bottom: 2px solid #79b8ec;
}

.chrome {
    width: 22px;
    height: 22px;
    border-radius: 50%;
    background:
        radial-gradient(circle, #3f7ff0 0 4px, #fff 4.500px 6px, transparent 6.500px),
        conic-gradient(#ea4335 0deg 90deg, #fbc02d 90deg 210deg, #34a853 210deg 300deg, #ea4335 300deg);
}

.tray {
    margin-left: auto;
    width: 189px;
    display: flex;
    align-items: center;
    padding-right: 13px;
}

.tray-cell {
    width: 24px;
    display: flex;
    justify-content: center;
}

.clock {
    width: 64px;
    text-align: center;
    color: #e0e0e0;
    font-size: 11.6px;
    line-height: 19px;
}

.tray-note {
    width: 40px;
}
```
